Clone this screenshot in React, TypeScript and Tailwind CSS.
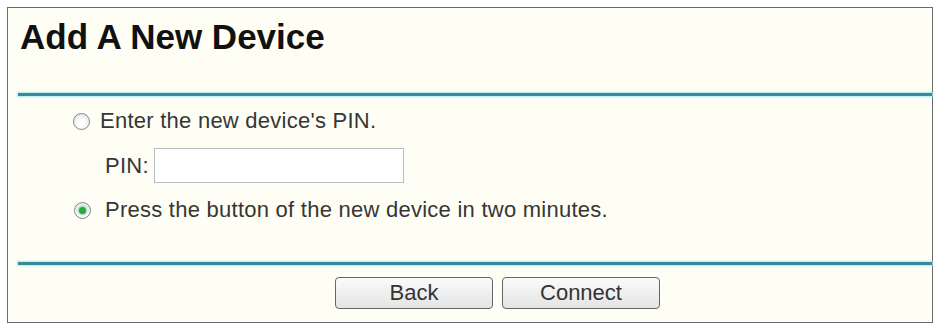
const Radio = ({ checked }: { checked?: boolean }) => (
  <span className="flex h-[17px] w-[17px] shrink-0 items-center justify-center rounded-full border-[1.5px] border-[#7f8792] bg-[radial-gradient(circle_at_50%_65%,#ffffff_25%,#d9dde6_100%)]">
    {checked && <span className="h-[7px] w-[7px] rounded-full bg-[#2aa845] shadow-[0_0_2px_1px_#86d894]" />}
  </span>
);

const Rule = () => (
  <div className="ml-[10px] h-[3px] bg-[#3b8a9a] shadow-[0_0_2px_1px_#a6eaf4]" />
);

const Button = ({ label }: { label: string }) => (
  <button className="h-[32px] w-[158px] rounded-[4px] border-[1.5px] border-[#666] bg-gradient-to-b from-[#fbfbfb] to-[#e4e4e4] text-[22px] leading-none text-[#333]">
    {label}
  </button>
);

export default function App() {
  return (
    <div className="h-[326px] w-[937px] bg-white pt-[7px] pl-[7px] pr-[4px] pb-[3px] font-['Liberation_Sans',Arial,sans-serif]">
      <div className="flex h-full flex-col border border-[#6a6a6a] bg-[#fffef4]">
        <div className="h-[85px] pl-[12px] pt-[9px]">
          <h1 className="text-[35px] font-bold leading-[40px] text-[#111]">Add A New Device</h1>
        </div>
        <Rule />
        <div className="flex h-[166px] flex-col pt-[13px] text-[22px] tracking-[0.25px] text-[#363636]">
          <div className="flex h-[24px] items-center gap-[10px] pl-[65px] leading-[24px]">
            <Radio />
            <span>Enter the new device's PIN.</span>
          </div>
          <div className="mt-[15px] flex items-center gap-[5px] pl-[97px]">
            <span>PIN:</span>
            <input className="h-[35px] w-[250px] border border-[#b9bcc0] bg-white outline-none" />
          </div>
          <div className="mt-[15px] flex h-[24px] items-center gap-[14px] pl-[66px] leading-[24px]">
            <Radio checked />
            <span>Press the button of the new device in two minutes.</span>
          </div>
        </div>
        <Rule />
        <div className="flex gap-[9px] pl-[327px] pt-[12px]">
          <Button label="Back" />
          <Button label="Connect" />
        </div>
      </div>
    </div>
  );
}
